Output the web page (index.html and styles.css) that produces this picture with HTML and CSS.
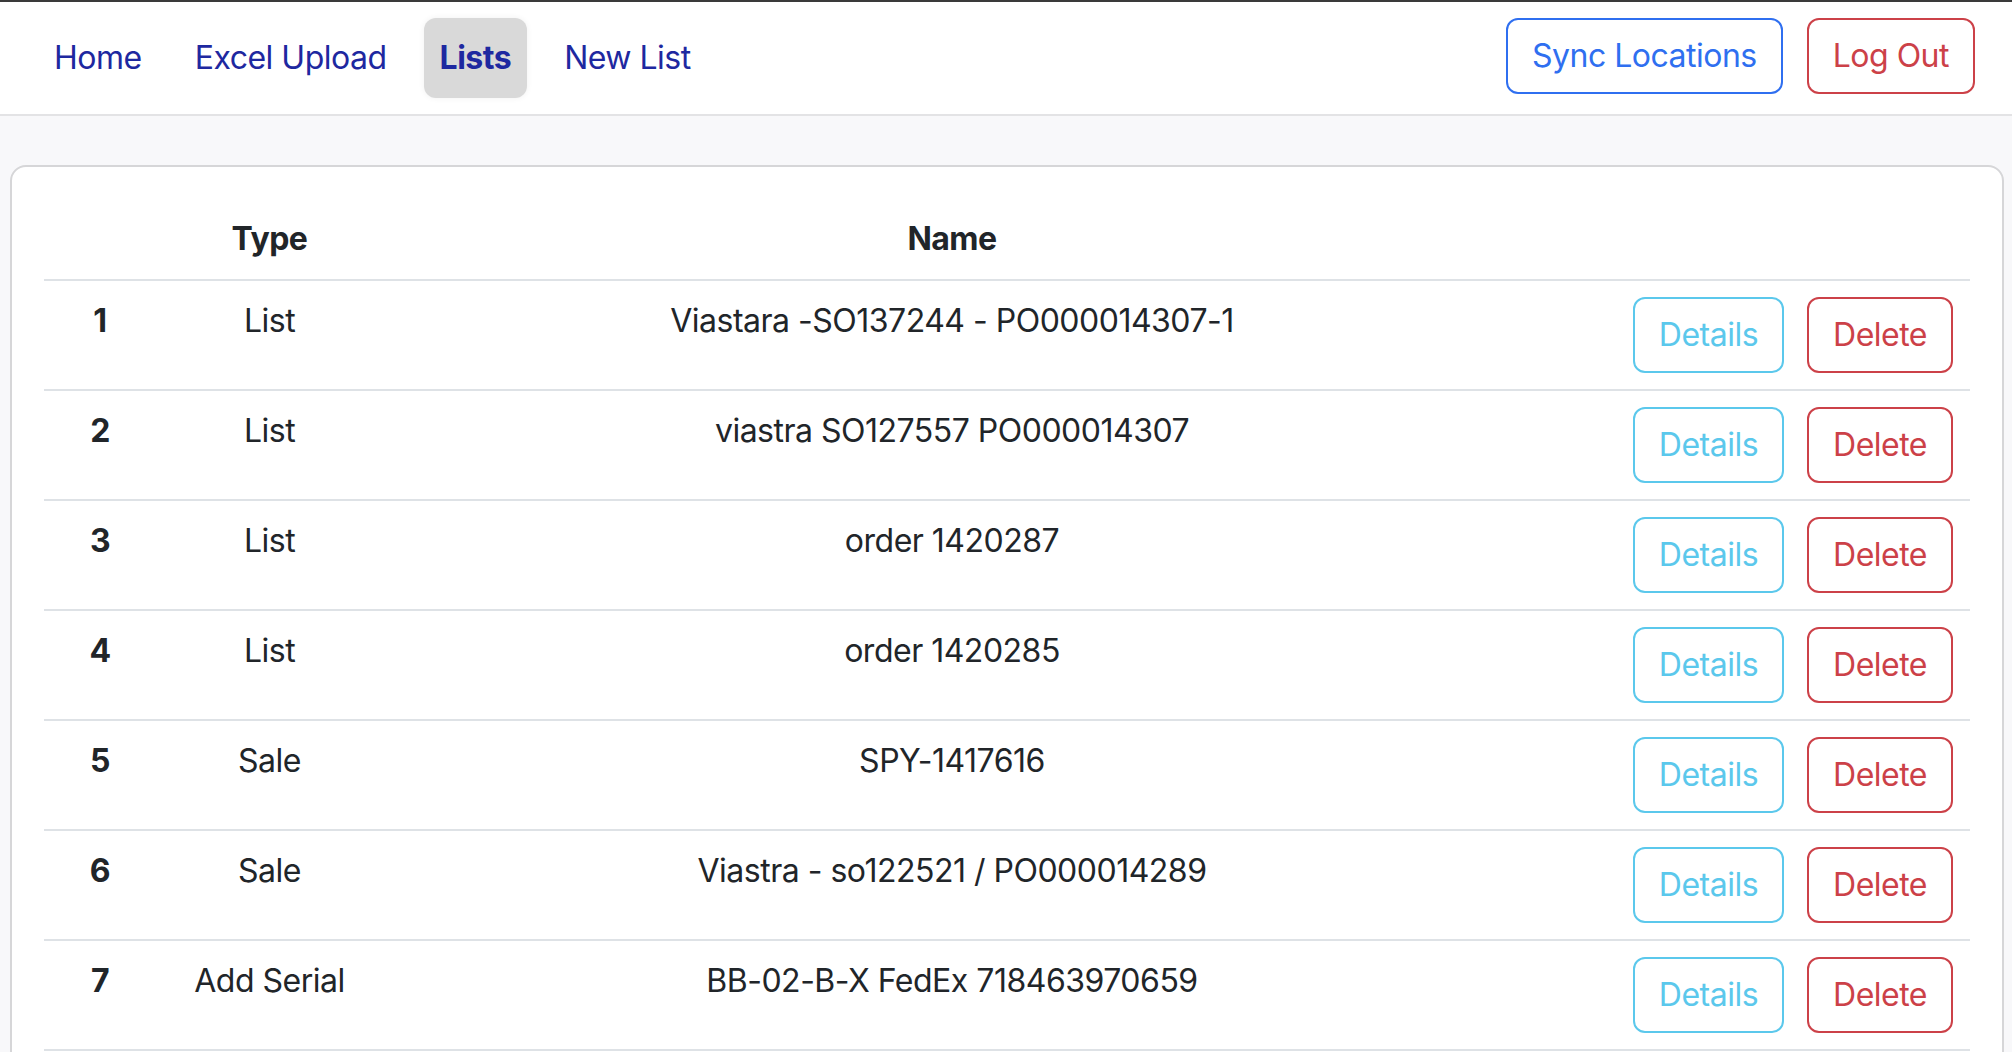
FILE: index.html
```html
<!DOCTYPE html>
<html>
<head>
<meta charset="utf-8">
<link rel="stylesheet" href="styles.css">
</head>
<body>
<header class="navbar">
  <nav class="nav-links">
    <a class="nav-link" href="#">Home</a>
    <a class="nav-link" href="#">Excel Upload</a>
    <a class="nav-link active" href="#">Lists</a>
    <a class="nav-link" href="#">New List</a>
  </nav>
  <div class="nav-actions">
    <button class="btn btn-primary">Sync Locations</button>
    <button class="btn btn-danger">Log Out</button>
  </div>
</header>
<main class="page">
  <section class="card">
    <table class="table">
      <colgroup>
        <col class="c-num"><col class="c-type"><col class="c-name"><col class="c-act">
      </colgroup>
      <thead>
        <tr><th></th><th>Type</th><th>Name</th><th></th></tr>
      </thead>
      <tbody>
        <tr><td class="num">1</td><td>List</td><td>Viastara -SO137244 - PO000014307-1</td><td class="act"><div class="actions"><button class="btn btn-info">Details</button><button class="btn btn-danger">Delete</button></div></td></tr>
        <tr><td class="num">2</td><td>List</td><td>viastra SO127557 PO000014307</td><td class="act"><div class="actions"><button class="btn btn-info">Details</button><button class="btn btn-danger">Delete</button></div></td></tr>
        <tr><td class="num">3</td><td>List</td><td>order 1420287</td><td class="act"><div class="actions"><button class="btn btn-info">Details</button><button class="btn btn-danger">Delete</button></div></td></tr>
        <tr><td class="num">4</td><td>List</td><td>order 1420285</td><td class="act"><div class="actions"><button class="btn btn-info">Details</button><button class="btn btn-danger">Delete</button></div></td></tr>
        <tr><td class="num">5</td><td>Sale</td><td>SPY-1417616</td><td class="act"><div class="actions"><button class="btn btn-info">Details</button><button class="btn btn-danger">Delete</button></div></td></tr>
        <tr><td class="num">6</td><td>Sale</td><td>Viastra - so122521 / PO000014289</td><td class="act"><div class="actions"><button class="btn btn-info">Details</button><button class="btn btn-danger">Delete</button></div></td></tr>
        <tr><td class="num">7</td><td>Add Serial</td><td>BB-02-B-X FedEx 718463970659</td><td class="act"><div class="actions"><button class="btn btn-info">Details</button><button class="btn btn-danger">Delete</button></div></td></tr>
      </tbody>
    </table>
  </section>
</main>
</body>
</html>
```
FILE: styles.css
```css
* { box-sizing: border-box; }
html, body { margin: 0; padding: 0; }
body {
  font-family: Inter, "Liberation Sans", sans-serif;
  font-size: 32px;
  line-height: 48px;
  letter-spacing: -0.5px;
  color: #212529;
  background: #f8f8fa;
  border-top: 2px solid #3a3a3a;
  overflow: hidden;
  height: 1052px;
}
.navbar {
  display: flex;
  justify-content: space-between;
  align-items: flex-start;
  background: #fff;
  padding: 16px 37px 16px 38px;
  border-bottom: 2px solid #e3e3e5;
}
.nav-links { display: flex; gap: 21px; }
.nav-link {
  display: block;
  padding: 16px;
  color: #1e28a0;
  text-decoration: none;
  border-radius: 12px;
}
.nav-link.active {
  background: #d9d9d9;
  font-weight: 700;
  box-shadow: 0 0 6px rgba(0,0,0,0.06);
}
.nav-actions { display: flex; gap: 24px; }
.btn {
  font-family: inherit;
  font-size: 32px;
  line-height: 48px;
  letter-spacing: -0.5px;
  padding: 12px 24px;
  border: 2px solid;
  border-radius: 12px;
  background: transparent;
  cursor: pointer;
}
.btn-primary { color: #2f6ff0; border-color: #2f6ff0; }
.btn-danger { color: #cc4148; border-color: #cc4148; }
.btn-info { color: #5bc8ec; border-color: #5bc8ec; }
.page { padding: 49px 8px 0 10px; }
.card {
  background: #fff;
  border: 2px solid #d6d6d8;
  border-radius: 16px;
  padding: 32px;
  min-height: 1000px;
}
.table {
  width: 100%;
  border-collapse: collapse;
  table-layout: fixed;
}
.c-num { width: 112px; }
.c-type { width: 227px; }
.c-name { width: 1138px; }
.table th, .table td {
  padding: 16px;
  text-align: center;
  vertical-align: top;
  border-bottom: 2px solid #dee2e6;
  white-space: nowrap;
}
.table th { font-weight: 700; }
.table td.num { font-weight: 700; }
.table td.act { padding-right: 17px; }
.actions { display: flex; justify-content: flex-end; gap: 23px; }
```
